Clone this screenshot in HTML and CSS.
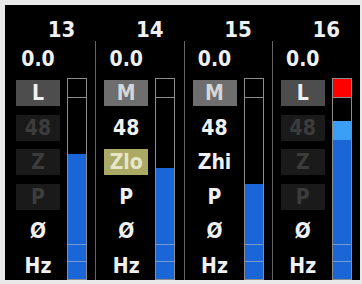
FILE: index.html
```html
<html>
<head>
	<title>Channel Strips</title>
	<link rel="stylesheet" href="styles.css">
</head>
<body>

	<div class="mixer">

		<div class="strip">
			<div class="num">13</div>
			<div class="chan first">
				<div class="ctrls">
					<div class="cell">0.0</div>
					<div class="cell btn on">L</div>
					<div class="cell btn off">48</div>
					<div class="cell btn off">Z</div>
					<div class="cell btn off">P</div>
					<div class="cell">Ø</div>
					<div class="cell">Hz</div>
				</div>
				<div class="meter">
					<div class="clip"></div>
					<div class="bar"><div class="fill" style="height:125px"></div></div>
				</div>
			</div>
		</div>

		<div class="strip">
			<div class="num">14</div>
			<div class="chan">
				<div class="ctrls">
					<div class="cell">0.0</div>
					<div class="cell btn mid">M</div>
					<div class="cell">48</div>
					<div class="cell btn lo">Zlo</div>
					<div class="cell">P</div>
					<div class="cell">Ø</div>
					<div class="cell">Hz</div>
				</div>
				<div class="meter">
					<div class="clip"></div>
					<div class="bar"><div class="fill" style="height:111px"></div></div>
				</div>
			</div>
		</div>

		<div class="strip">
			<div class="num">15</div>
			<div class="chan">
				<div class="ctrls">
					<div class="cell">0.0</div>
					<div class="cell btn mid">M</div>
					<div class="cell">48</div>
					<div class="cell">Zhi</div>
					<div class="cell">P</div>
					<div class="cell">Ø</div>
					<div class="cell">Hz</div>
				</div>
				<div class="meter">
					<div class="clip"></div>
					<div class="bar"><div class="fill" style="height:95px"></div></div>
				</div>
			</div>
		</div>

		<div class="strip">
			<div class="num">16</div>
			<div class="chan">
				<div class="ctrls">
					<div class="cell">0.0</div>
					<div class="cell btn on">L</div>
					<div class="cell btn off">48</div>
					<div class="cell btn off">Z</div>
					<div class="cell btn off">P</div>
					<div class="cell">Ø</div>
					<div class="cell">Hz</div>
				</div>
				<div class="meter">
					<div class="clip over"></div>
					<div class="bar"><div class="fill peak" style="height:158px"></div></div>
				</div>
			</div>
		</div>

	</div>

</body>
</html>
```

FILE: styles.css
```css
* {
	margin: 0;
	padding: 0;
	box-sizing: border-box;
}

body {
	background: #fff;
}

.mixer {
	width: 362px;
	height: 284px;
	display: flex;
	padding-left: 2px;
	background: #000;
	border-style: solid;
	border-color: #e9e9e9;
	border-width: 5px 2px 4px 5px;
	font-family: "DejaVu Sans Condensed", "DejaVu Sans", sans-serif;
	font-weight: bold;
	color: #f0f0f2;
}

.strip {
	flex: 1;
	display: flex;
	flex-direction: column;
}

.num {
	height: 36px;
	padding: 14px 20px 0 0;
	font-size: 22px;
	line-height: 22px;
	text-align: right;
}

.chan {
	flex: 1;
	display: flex;
	gap: 7px;
	padding-left: 8px;
	border-left: 1px solid #666;
}

.chan.first {
	border-left-color: #000;
}

.ctrls {
	width: 44px;
	display: flex;
	flex-direction: column;
	gap: 8.5px;
	padding-top: 4.5px;
}

.cell {
	height: 26px;
	font-size: 21px;
	line-height: 26px;
	text-align: center;
}

.btn.on {
	background: #4d4d4d;
}

.btn.off {
	background: #1a1a1a;
	color: #3c3c3c;
}

.btn.mid {
	background: #6e6e6e;
	color: #d6d6d6;
}

.btn.lo {
	background: #aaa965;
	color: #e6e6c8;
}

.meter {
	width: 20px;
	margin-top: 37px;
	display: flex;
	flex-direction: column;
	border: 1px solid #8c8c8c;
}

.clip {
	height: 19px;
	border-bottom: 1px solid #8c8c8c;
}

.clip.over {
	background: #f00;
}

.bar {
	flex: 1;
	display: flex;
	flex-direction: column;
	justify-content: flex-end;
}

.fill {
	background: linear-gradient(to top, transparent 17px, #7598cf 17px 18px, transparent 18px 34px, #7598cf 34px 35px, transparent 35px), #1a66d6;
}

.fill.peak {
	border-top: 19px solid #3ba0f5;
}
```
